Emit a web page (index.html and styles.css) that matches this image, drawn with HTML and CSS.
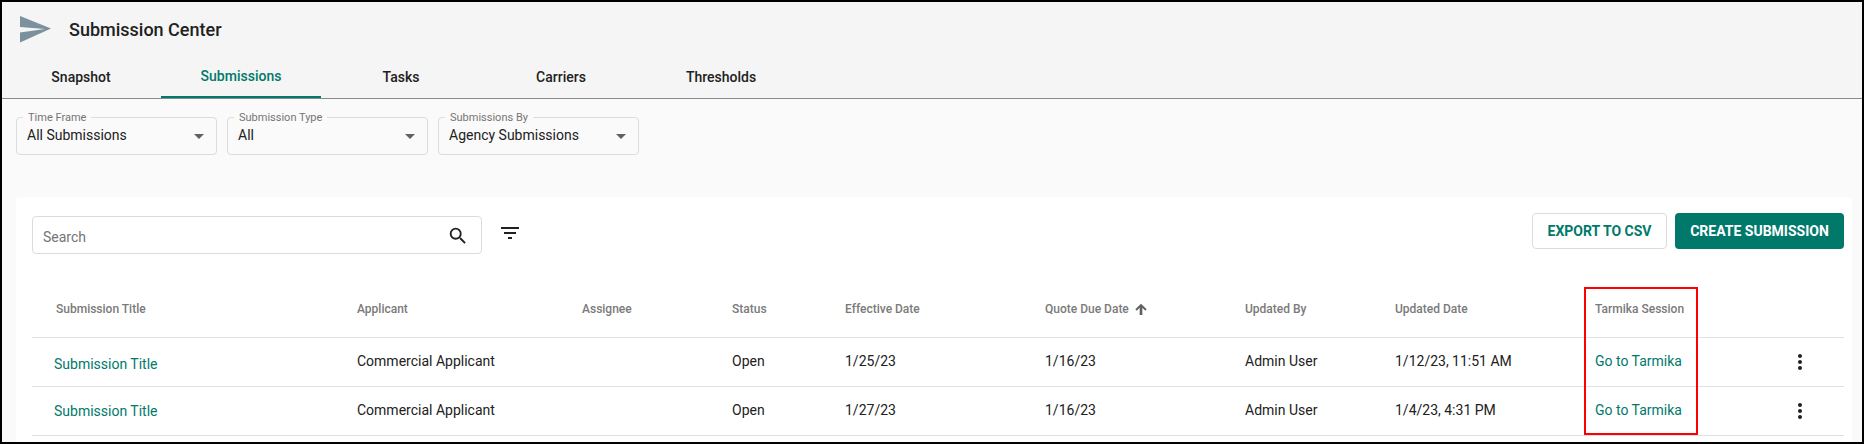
FILE: index.html
```html
<!DOCTYPE html>
<html lang="en">
<head>
  <meta charset="UTF-8">
  <meta name="viewport" content="width=device-width, initial-scale=1.0">
  <title>Submission Center</title>
  <link rel="stylesheet" href="styles.css">
</head>
<body>
  <div class="page">
    <header class="top">
      <div class="title-row">
        <svg class="logo" width="31" height="27" viewBox="0 0 31 27">
          <path fill="#7b919d" d="M0 0L31 12.6L0 26.6V16.5L25 13L0 11Z"/>
        </svg>
        <h1 class="title">Submission Center</h1>
      </div>
      <nav class="tabs">
        <a class="tab">Snapshot</a>
        <a class="tab active">Submissions</a>
        <a class="tab">Tasks</a>
        <a class="tab">Carriers</a>
        <a class="tab">Thresholds</a>
      </nav>
    </header>

    <div class="filters">
      <div class="select">
        <span class="select-label">Time Frame</span>
        <span class="select-value">All Submissions</span>
        <span class="arrow"></span>
      </div>
      <div class="select">
        <span class="select-label">Submission Type</span>
        <span class="select-value">All</span>
        <span class="arrow"></span>
      </div>
      <div class="select">
        <span class="select-label">Submissions By</span>
        <span class="select-value">Agency Submissions</span>
        <span class="arrow"></span>
      </div>
    </div>

    <main class="card">
      <div class="toolbar">
        <div class="search">
          <span class="placeholder">Search</span>
          <svg class="search-icon" width="22" height="22" viewBox="0 0 24 24">
            <path fill="#212121" d="M15.5 14h-.79l-.28-.27A6.47 6.47 0 0 0 16 9.5 6.5 6.5 0 1 0 9.5 16c1.61 0 3.09-.59 4.23-1.57l.27.28v.79l5 4.99L20.49 19l-4.99-5zm-6 0C7.01 14 5 11.99 5 9.5S7.01 5 9.5 5 14 7.01 14 9.5 11.99 14 9.5 14z"/>
          </svg>
        </div>
        <svg class="filter-icon" width="24" height="24" viewBox="0 0 24 24">
          <path fill="#212121" d="M10 18h4v-2h-4v2zM3 6v2h18V6H3zm3 7h12v-2H6v2z"/>
        </svg>
        <div class="actions">
          <button class="btn btn-outline">EXPORT TO CSV</button>
          <button class="btn btn-fill">CREATE SUBMISSION</button>
        </div>
      </div>

      <div class="table-wrap">
        <table class="grid">
          <colgroup>
            <col class="c-title"><col class="c-applicant"><col class="c-assignee"><col class="c-status"><col class="c-date"><col class="c-date"><col class="c-by"><col class="c-date"><col class="c-session"><col>
          </colgroup>
          <thead>
            <tr>
              <th class="first">Submission Title</th>
              <th>Applicant</th>
              <th>Assignee</th>
              <th>Status</th>
              <th>Effective Date</th>
              <th>Quote Due Date
                <svg class="sort" width="16" height="16" viewBox="0 0 24 24"><path fill="#616161" d="M3.5 12.5l2 2L10 10v11h4V10l4.5 4.5 2-2L12 4z"/></svg>
              </th>
              <th>Updated By</th>
              <th>Updated Date</th>
              <th>Tarmika Session</th>
              <th></th>
            </tr>
          </thead>
          <tbody>
            <tr>
              <td><a class="link title-link low">Submission Title</a></td>
              <td>Commercial Applicant</td>
              <td></td>
              <td>Open</td>
              <td>1/25/23</td>
              <td>1/16/23</td>
              <td>Admin User</td>
              <td>1/12/23, 11:51 AM</td>
              <td><a class="link">Go to Tarmika</a></td>
              <td class="more"><svg width="24" height="24" viewBox="0 0 24 24"><path fill="#212121" d="M12 8c1.1 0 2-.9 2-2s-.9-2-2-2-2 .9-2 2 .9 2 2 2zm0 2c-1.1 0-2 .9-2 2s.9 2 2 2 2-.9 2-2-.9-2-2-2zm0 6c-1.1 0-2 .9-2 2s.9 2 2 2 2-.9 2-2-.9-2-2-2z"/></svg></td>
            </tr>
            <tr>
              <td><a class="link title-link">Submission Title</a></td>
              <td>Commercial Applicant</td>
              <td></td>
              <td>Open</td>
              <td>1/27/23</td>
              <td>1/16/23</td>
              <td>Admin User</td>
              <td>1/4/23, 4:31 PM</td>
              <td><a class="link">Go to Tarmika</a></td>
              <td class="more"><svg width="24" height="24" viewBox="0 0 24 24"><path fill="#212121" d="M12 8c1.1 0 2-.9 2-2s-.9-2-2-2-2 .9-2 2 .9 2 2 2zm0 2c-1.1 0-2 .9-2 2s.9 2 2 2 2-.9 2-2-.9-2-2-2zm0 6c-1.1 0-2 .9-2 2s.9 2 2 2 2-.9 2-2-.9-2-2-2z"/></svg></td>
            </tr>
          </tbody>
        </table>
        <div class="highlight"></div>
      </div>
    </main>
  </div>
</body>
</html>
```

FILE: styles.css
```css
* {
  box-sizing: border-box;
}
html, body {
  margin: 0;
  height: 100%;
}
body {
  font-family: Roboto, sans-serif;
  font-size: 14px;
  color: #212121;
  background-color: #000;
}
.page {
  height: 100vh;
  border: 2px solid #000;
  background-color: #fafafa;
  overflow: hidden;
  display: flex;
  flex-direction: column;
}
.top {
  height: 97px;
  background-color: #f5f5f5;
  border-bottom: 1px solid #8a8a8a;
}
.title-row {
  height: 54px;
  display: flex;
  align-items: center;
  padding-left: 18px;
}
.logo {
  flex: none;
}
.title {
  margin: 0 0 0 18px;
  font-size: 18px;
  font-weight: 500;
}
.tabs {
  display: flex;
  height: 42px;
  margin-left: -1px;
}
.tab {
  width: 160px;
  display: flex;
  align-items: center;
  justify-content: center;
  font-weight: 500;
}
.tab.active {
  color: #00796b;
  border-bottom: 2px solid #00796b;
}
.filters {
  display: flex;
  gap: 10px;
  padding: 18px 14px 0;
}
.select {
  position: relative;
  width: 201px;
  height: 38px;
  padding: 9px 9px 0 10px;
  border: 1px solid #dcdcdc;
  border-radius: 4px;
  line-height: 16px;
}
.select-label {
  position: absolute;
  top: -7px;
  left: 6px;
  padding: 0 5px;
  font-size: 11px;
  line-height: 13px;
  color: #757575;
  background-color: #fafafa;
}
.arrow {
  position: absolute;
  top: 16px;
  right: 12px;
  width: 0;
  height: 0;
  border-left: 5px solid transparent;
  border-right: 5px solid transparent;
  border-top: 5px solid #616161;
}
.card {
  flex: 1;
  margin: 42px 10px 0 14px;
  padding: 16px 8px 0 16px;
  background-color: #fff;
  border-radius: 4px 4px 0 0;
}
.toolbar {
  display: flex;
  align-items: flex-start;
  height: 74px;
}
.search {
  width: 450px;
  height: 38px;
  margin-top: 3px;
  padding: 3px 10px 0;
  display: flex;
  align-items: center;
  justify-content: space-between;
  border: 1px solid #dcdcdc;
  border-radius: 4px;
}
.placeholder {
  color: #757575;
}
.search-icon {
  margin: -1px 2px 0 0;
}
.filter-icon {
  margin: 8px 0 0 16px;
}
.actions {
  margin-left: auto;
  display: flex;
  gap: 8px;
}
.btn {
  height: 36px;
  border-radius: 4px;
  font-family: inherit;
  font-size: 14px;
  font-weight: 700;
  padding: 0;
}
.btn-outline {
  width: 135px;
  background-color: #fff;
  color: #00796b;
  border: 1px solid #dcdcdc;
}
.btn-fill {
  width: 169px;
  background-color: #00796b;
  color: #fff;
  border: none;
}
.table-wrap {
  position: relative;
}
.grid {
  width: 100%;
  border-collapse: collapse;
  table-layout: fixed;
}
.c-title { width: 325px; }
.c-applicant { width: 225px; }
.c-assignee { width: 150px; }
.c-status { width: 113px; }
.c-date { width: 200px; }
.c-by { width: 150px; }
.c-session { width: 173px; }
th {
  height: 50px;
  padding: 0 0 5px;
  text-align: left;
  font-size: 12px;
  font-weight: 500;
  color: #7a7a7a;
  border-bottom: 1px solid #e0e0e0;
}
th.first {
  padding-left: 24px;
}
td {
  height: 49px;
  padding: 0 0 2px;
  border-bottom: 1px solid #e0e0e0;
}
.link {
  color: #00796b;
}
.title-link {
  position: relative;
  top: 1px;
  margin-left: 22px;
}
.title-link.low {
  top: 3px;
}
.sort {
  vertical-align: -4px;
  margin-left: 1px;
}
.more svg {
  display: block;
  margin: 2px 0 0 20px;
}
.highlight {
  position: absolute;
  top: 0;
  left: 1552px;
  width: 114px;
  height: 148px;
  border: 2px solid #f00;
}
```
